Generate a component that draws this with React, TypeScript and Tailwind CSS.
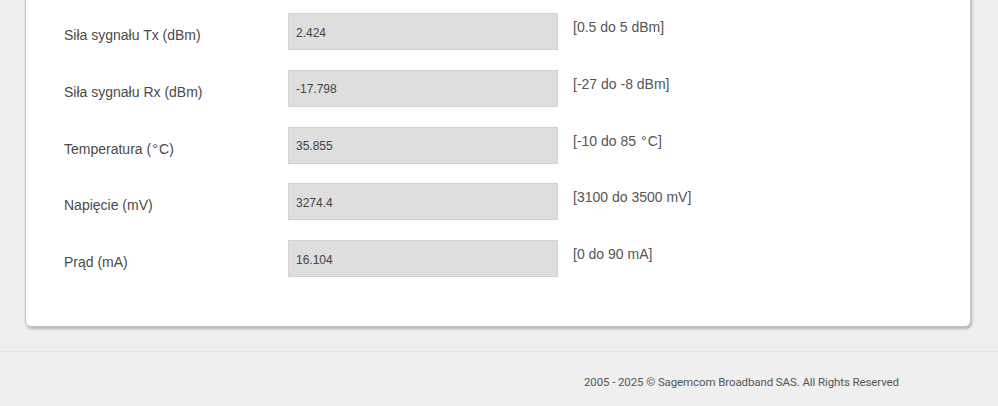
import React from "react";

const rows = [
  { label: "Siła sygnału Tx (dBm)", value: "2.424", range: "[0.5 do 5 dBm]" },
  { label: "Siła sygnału Rx (dBm)", value: "-17.798", range: "[-27 do -8 dBm]" },
  { label: "Temperatura (\u200A°\u200AC)", value: "35.855", range: "[-10 do 85 \u200A°\u200AC]" },
  { label: "Napięcie (mV)", value: "3274.4", range: "[3100 do 3500 mV]" },
  { label: "Prąd (mA)", value: "16.104", range: "[0 do 90 mA]" },
];

export default function App() {
  return (
    <div
      className="min-h-screen overflow-hidden bg-[#efefef]"
      style={{ fontFamily: '"Liberation Sans", Arial, sans-serif' }}
    >
      <div className="ml-[25px] mr-[27px] -mt-[20px] rounded-[6px] border border-[#c4c4c4] bg-white pl-[38px] pt-[32px] pb-[29px] shadow-[1px_2px_3px_rgba(0,0,0,0.25)]">
        {rows.map((r) => (
          <div key={r.label} className="flex h-[56.75px] items-start">
            <div className="w-[224px] pt-[12px] text-[14px] leading-5 text-[#4a4a4a]">
              {r.label}
            </div>
            <div className="flex h-[37px] w-[270px] items-center border border-[#d2d2d2] bg-[#dedede] px-[7px] pt-[2px] text-[12px] text-[#444]">
              {r.value}
            </div>
            <div className="ml-[15px] pt-[4px] text-[14px] leading-5 text-[#555]">
              {r.range}
            </div>
          </div>
        ))}
      </div>
      <div className="mt-[24px] border-t border-[#e2e2e2]">
        <div
          className="flex justify-end pr-[99px] pt-[22px] text-[11.5px] leading-4 tracking-[-0.1px] text-[#555]"
          style={{ fontFamily: "Roboto, 'Liberation Sans', sans-serif" }}
        >
          2005 - 2025 © Sagemcom Broadband SAS. All Rights Reserved
        </div>
      </div>
    </div>
  );
}
